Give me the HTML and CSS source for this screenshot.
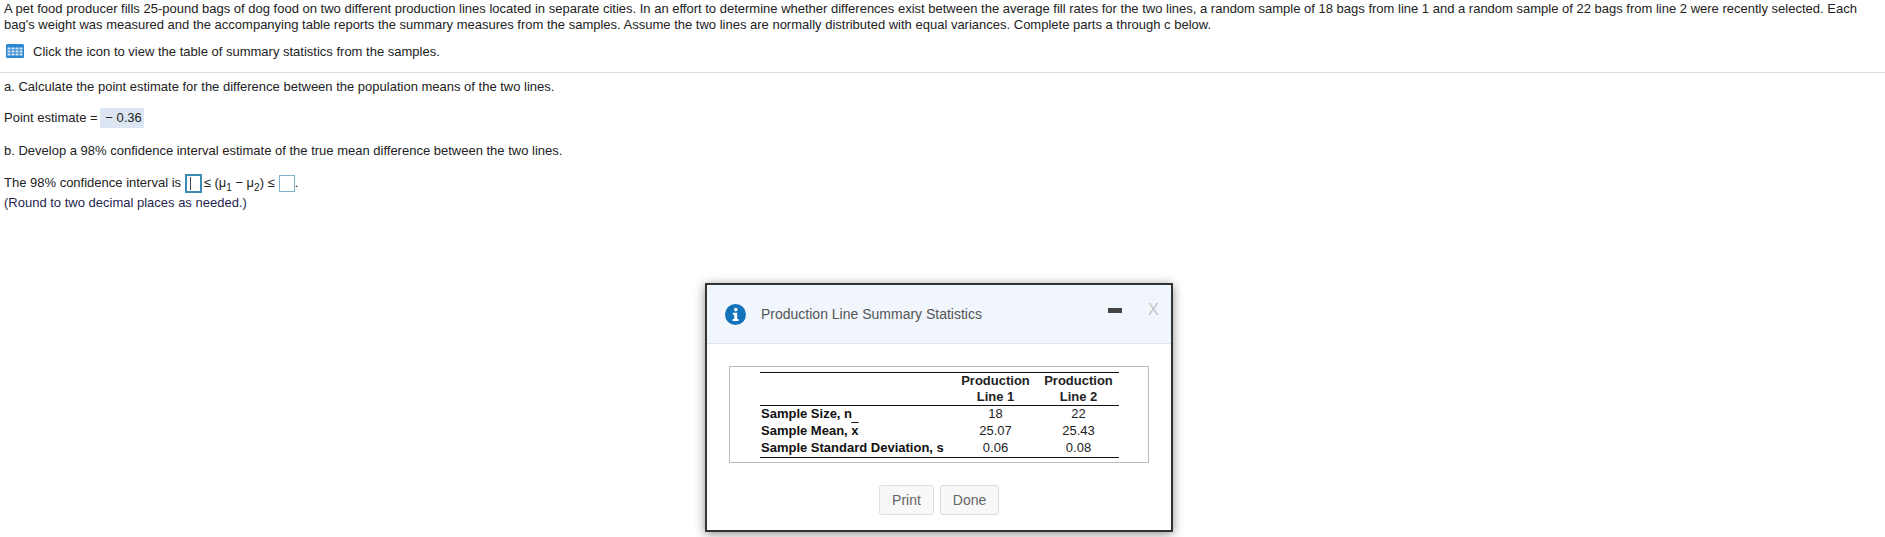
FILE: index.html
```html
<!DOCTYPE html>
<html lang="en">
<head>
    <meta charset="UTF-8">
    <meta name="viewport" content="width=device-width, initial-scale=1.0">
    <title>Production Line Question</title>
    <link rel="stylesheet" href="styles.css">
</head>
<body>
    <div class="intro">
        <p class="problem">A pet food producer fills 25-pound bags of dog food on two different production lines located in separate cities. In an effort to determine whether differences exist between the average fill rates for the two lines, a random sample of 18 bags from line 1 and a random sample of 22 bags from line 2 were recently selected. Each bag's weight was measured and the accompanying table reports the summary measures from the samples. Assume the two lines are normally distributed with equal variances. Complete parts a through c below.</p>
        <p class="table-link">
            <svg class="table-icon" width="18" height="14" viewBox="0 0 18 14">
                <rect width="18" height="14" rx="1.5" fill="#2b86cf"/>
                <path d="M1.5 3.5h3v2h-3zM5.5 3.5h3v2h-3zM9.5 3.5h3v2h-3zM13.5 3.5h3v2h-3zM1.5 6.5h3v2h-3zM5.5 6.5h3v2h-3zM9.5 6.5h3v2h-3zM13.5 6.5h3v2h-3zM1.5 9.5h3v2h-3zM5.5 9.5h3v2h-3zM9.5 9.5h3v2h-3zM13.5 9.5h3v2h-3z" fill="#d6e8f7"/>
            </svg>
            <span>Click the icon to view the table of summary statistics from the samples.</span>
        </p>
    </div>

    <div class="parts">
        <p class="part-a">a. Calculate the point estimate for the difference between the population means of the two lines.</p>
        <p class="estimate">Point estimate = <span class="answer">&minus; 0.36</span></p>
        <p class="part-b">b. Develop a 98% confidence interval estimate of the true mean difference between the two lines.</p>
        <p class="interval">The 98% confidence interval is <span class="box box-active"><span class="cursor"></span></span><span class="math">&le; (&mu;<sub>1</sub> &minus; &mu;<sub>2</sub>) &le;</span><span class="box"></span>.</p>
        <p class="note">(Round to two decimal places as needed.)</p>
    </div>

    <div class="dialog">
        <div class="dialog-head">
            <svg class="info-icon" width="21" height="21" viewBox="0 0 21 21">
                <circle cx="10.5" cy="10.5" r="10.5" fill="#1273bb"/>
                <circle cx="10.8" cy="5.6" r="1.8" fill="#fff"/>
                <path d="M7.8 8.8h4.4v6.2h1.4v2H7.6v-2h1.6v-4.2H7.8z" fill="#fff"/>
            </svg>
            <span class="dialog-title">Production Line Summary Statistics</span>
            <span class="minimize"></span>
            <span class="close">X</span>
        </div>
        <div class="dialog-body">
            <div class="table-box">
                <table class="stats">
                    <thead>
                        <tr>
                            <th class="label"></th>
                            <th>Production<br>Line 1</th>
                            <th>Production<br>Line 2</th>
                        </tr>
                    </thead>
                    <tbody>
                        <tr>
                            <td class="label">Sample Size, n</td>
                            <td>18</td>
                            <td>22</td>
                        </tr>
                        <tr>
                            <td class="label">Sample Mean, <span class="xbar">x</span></td>
                            <td>25.07</td>
                            <td>25.43</td>
                        </tr>
                        <tr>
                            <td class="label">Sample Standard Deviation, s</td>
                            <td>0.06</td>
                            <td>0.08</td>
                        </tr>
                    </tbody>
                </table>
            </div>
            <div class="buttons">
                <button class="btn btn-print">Print</button>
                <button class="btn btn-done">Done</button>
            </div>
        </div>
    </div>
</body>
</html>
```
FILE: styles.css
```css
* {
    margin: 0;
    padding: 0;
    box-sizing: border-box;
}

body {
    position: relative;
    height: 537px;
    overflow: hidden;
    font-family: 'Liberation Sans', Arial, sans-serif;
    font-size: 13px;
    color: #222;
    background-color: #fff;
}

.intro {
    height: 73px;
    padding: 0 4px;
    border-bottom: 1px solid #d9d9d9;
}

.problem {
    line-height: 16px;
    padding-top: 1px;
}

.table-link {
    display: flex;
    align-items: center;
    gap: 9px;
    margin-top: 9px;
    padding-left: 2px;
    height: 18px;
}

.parts {
    padding: 6px 4px 0;
}

.parts p {
    line-height: 16px;
}

.parts .estimate {
    margin-top: 13px;
    height: 20px;
    line-height: 20px;
}

.answer {
    display: inline-block;
    height: 20px;
    line-height: 20px;
    padding: 0 2px 0 5px;
    margin-left: -1px;
    background-color: #dce6f2;
}

.parts .part-b {
    margin-top: 15px;
}

.parts .interval {
    display: flex;
    align-items: center;
    margin-top: 14px;
    height: 20px;
    white-space: pre;
}

.box {
    display: inline-block;
    width: 16px;
    height: 17px;
    border: 1px solid #7fb2cc;
}

.box-active {
    width: 17px;
    height: 19px;
    border: 2px solid #3a8bb0;
}

.cursor {
    display: block;
    width: 1px;
    height: 13px;
    margin: 1px 0 0 3px;
    background-color: #444;
}

.math {
    margin: 0 4px 0 2px;
}

.math sub {
    font-size: 10px;
    line-height: 0;
}

.parts .note {
    margin-top: 2px;
    color: #1f1f4f;
}

/* popup over the question */
.dialog {
    position: absolute;
    left: 705px;
    top: 283px;
    width: 468px;
    height: 249px;
    background-color: #fff;
    border: 2px solid #333;
    box-shadow: 0 2px 10px rgba(0, 0, 0, 0.45);
}

.dialog-head {
    position: relative;
    display: flex;
    align-items: center;
    height: 59px;
    padding-left: 18px;
    background-color: #f0f6fc;
    border-bottom: 1px solid #dde6ee;
}

.dialog-title {
    margin-left: 15px;
    font-size: 14px;
    color: #555;
}

.minimize {
    position: absolute;
    left: 401px;
    top: 23px;
    width: 14px;
    height: 5px;
    background-color: #444;
}

.close {
    position: absolute;
    left: 441px;
    top: 16px;
    font-size: 16px;
    color: #c4c4c4;
}

.dialog-body {
    padding: 22px 22px 0;
}

.table-box {
    width: 420px;
    height: 97px;
    padding: 5px 0 0 30px;
    border: 1px solid #bbb;
}

.stats {
    width: 359px;
    table-layout: fixed;
    border-collapse: collapse;
    border-top: 1.5px solid #111;
    border-bottom: 1.5px solid #111;
    font-size: 13px;
    line-height: 16px;
    color: #222;
}

.stats thead tr {
    border-bottom: 1.5px solid #111;
}

.stats th,
.stats td {
    width: 83px;
    text-align: center;
    vertical-align: middle;
    padding: 0 0 0 2px;
}

.stats tbody td {
    padding-bottom: 1px;
}

.stats .label {
    width: 193px;
    text-align: left;
    font-weight: bold;
    white-space: nowrap;
    padding-left: 1px;
    color: #111;
}

.xbar {
    text-decoration: overline;
}

.buttons {
    display: flex;
    justify-content: center;
    gap: 6px;
    margin-top: 22px;
}

.btn {
    height: 30px;
    font-family: 'Liberation Sans', Arial, sans-serif;
    font-size: 14px;
    color: #666;
    background-color: #f8f8f8;
    border: 1px solid #ddd;
    border-radius: 3px;
}

.btn-print {
    width: 55px;
}

.btn-done {
    width: 59px;
}
```
